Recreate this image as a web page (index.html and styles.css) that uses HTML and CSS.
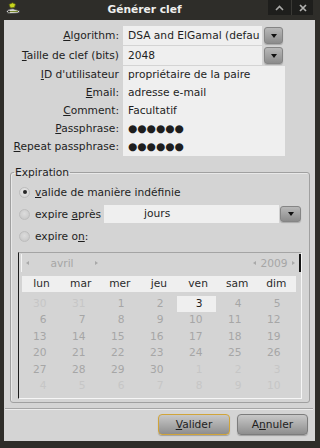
FILE: index.html
```html
<!DOCTYPE html>
<html lang="fr">
<head>
<meta charset="utf-8">
<title>Générer clef</title>
<link rel="stylesheet" href="styles.css">
</head>
<body>
<div class="window">
  <div class="titlebar">
    <span class="app-icon">
      <svg width="16" height="14" viewBox="0 0 16 14">
        <path d="M4 2.5 L7.5 0.8 L10.5 2.2 L9.5 5.5 L5.5 6 Z" fill="#c8d61e" stroke="#5a6010" stroke-width="0.8"/>
        <path d="M1.5 9.5 Q3 6.5 8 6.8 L14.5 8.8 Q15 10.5 13 11 L7 11.5 Q2.5 12.5 1.5 9.5 Z" fill="#e8e8e8" stroke="#3a3a3a" stroke-width="0.8"/>
        <path d="M3 9.6 L13 9.4" stroke="#7a8a30" stroke-width="1.2"/>
        <circle cx="4" cy="9.6" r="1.1" fill="#2c2b27"/>
      </svg>
    </span>
    <span class="title">Générer clef</span>
    <div class="wm-buttons">
      <span class="wm-btn max">
        <svg width="9" height="6" viewBox="0 0 9 6"><polyline points="1,5 4.5,1.5 8,5" fill="none" stroke="#a9a9a7" stroke-width="1.6"/></svg>
      </span>
      <span class="wm-btn close">
        <svg width="8" height="8" viewBox="0 0 8 8"><path d="M1 1 L7 7 M7 1 L1 7" stroke="#b2b2b0" stroke-width="1.7"/></svg>
      </span>
    </div>
  </div>

  <div class="content">
    <div class="form">
      <label class="lbl combo-lbl"><u>A</u>lgorithm:</label>
      <div class="combo">
        <div class="entry">DSA and ElGamal (defau</div>
        <span class="drop"><span class="tri"></span></span>
      </div>

      <label class="lbl combo-lbl"><u>T</u>aille de clef (bits)</label>
      <div class="combo">
        <div class="entry">2048</div>
        <span class="drop"><span class="tri"></span></span>
      </div>

      <label class="lbl"><u>I</u>D d'utilisateur</label>
      <div class="entry text">propriétaire de la paire</div>

      <label class="lbl"><u>E</u>mail:</label>
      <div class="entry text">adresse e-mail</div>

      <label class="lbl"><u>C</u>omment:</label>
      <div class="entry text">Facultatif</div>

      <label class="lbl"><u>P</u>assphrase:</label>
      <div class="entry text dots">●●●●●●</div>

      <label class="lbl"><u>R</u>epeat passphrase:</label>
      <div class="entry text dots">●●●●●●</div>
    </div>

    <fieldset class="expiration">
      <legend>Expiration</legend>
      <div class="radio-row">
        <span class="radio checked"></span>
        <span class="radio-text"><u>v</u>alide de manière indéfinie</span>
      </div>
      <div class="radio-row">
        <span class="radio"></span>
        <span class="radio-text">expire <u>a</u>près</span>
        <div class="entry days">jours</div>
        <span class="drop wide"><span class="tri"></span></span>
      </div>
      <div class="radio-row">
        <span class="radio"></span>
        <span class="radio-text">expire o<u>n</u>:</span>
      </div>

      <div class="calendar">
        <div class="cal-head">
          <div class="cal-group">
            <span class="arrow left"></span>
            <span class="cal-month">avril</span>
            <span class="arrow right"></span>
          </div>
          <div class="cal-group">
            <span class="arrow left"></span>
            <span class="cal-year">2009</span>
            <span class="arrow right"></span>
          </div>
        </div>
        <div class="day-names">
          <span>lun</span><span>mar</span><span>mer</span><span>jeu</span><span>ven</span><span>sam</span><span>dim</span>
        </div>
        <div class="days-grid">
          <span class="out">30</span><span class="out">31</span><span>1</span><span>2</span><span class="sel">3</span><span>4</span><span>5</span>
          <span>6</span><span>7</span><span>8</span><span>9</span><span>10</span><span>11</span><span>12</span>
          <span>13</span><span>14</span><span>15</span><span>16</span><span>17</span><span>18</span><span>19</span>
          <span>20</span><span>21</span><span>22</span><span>23</span><span>24</span><span>25</span><span>26</span>
          <span>27</span><span>28</span><span>29</span><span>30</span><span class="out">1</span><span class="out">2</span><span class="out">3</span>
          <span class="out">4</span><span class="out">5</span><span class="out">6</span><span class="out">7</span><span class="out">8</span><span class="out">9</span><span class="out">10</span>
        </div>
      </div>
    </fieldset>

    <div class="separator"></div>

    <div class="actions">
      <button class="btn default"><u>V</u>alider</button>
      <button class="btn cancel">A<u>n</u>nuler</button>
    </div>
  </div>
</div>
</body>
</html>
```

FILE: styles.css
```css
html, body {
  margin: 0;
  padding: 0;
}

body {
  background: #2e2d29;
  font-family: "DejaVu Sans", "Noto Sans", sans-serif;
  font-size: 10.67px;
  color: #1e1e1e;
}

u {
  text-decoration: underline;
  text-underline-offset: 1px;
  text-decoration-thickness: 1px;
}

.window {
  width: 320px;
  height: 448px;
  display: flex;
  flex-direction: column;
  overflow: hidden;
}

/* Title bar */
.titlebar {
  height: 20px;
  display: flex;
  align-items: flex-start;
  flex-shrink: 0;
}

.app-icon {
  width: 16px;
  height: 14px;
  margin: 2px 0 0 5px;
  display: flex;
}

.title {
  flex: 1;
  text-align: center;
  color: #f0f0ee;
  font-weight: bold;
  line-height: 20px;
}

.wm-buttons {
  display: flex;
  margin-right: 7px;
}

.wm-btn {
  height: 15px;
  background: #1e1e1c;
  display: flex;
  align-items: center;
  justify-content: center;
}

.wm-btn.max {
  width: 23px;
}

.wm-btn.close {
  width: 21px;
  border-left: 1px solid #3a3935;
}

/* Content */
.content {
  margin: 0 5px 0 4px;
  height: 421px;
  background: #d4d4d4;
  box-sizing: border-box;
  padding-top: 6px;
  display: flex;
  flex-direction: column;
}

.form {
  display: grid;
  grid-template-columns: 109px 162px;
  grid-template-rows: 20px 20px repeat(5, 18px);
  column-gap: 4px;
  padding-left: 6px;
}

.lbl {
  text-align: right;
  white-space: nowrap;
  line-height: 18px;
  height: 18px;
}

.lbl.combo-lbl {
  line-height: 19px;
  height: 19px;
}

.entry {
  background: #efefef;
  padding-left: 5px;
  box-sizing: border-box;
  height: 18px;
  line-height: 18px;
  white-space: nowrap;
  overflow: hidden;
}

.entry.dots {
  letter-spacing: 0;
}

.combo {
  display: flex;
  gap: 2px;
  height: 19px;
}

.combo .entry {
  width: 139px;
  height: 19px;
  line-height: 19px;
}

.drop {
  width: 19px;
  height: 17px;
  margin-top: 1px;
  box-sizing: border-box;
  border: 1px solid #858585;
  border-radius: 3px;
  background: linear-gradient(#b8b8b8, #8c8c8c);
  box-shadow: 0 1px 1px rgba(0, 0, 0, 0.2);
  display: flex;
  align-items: center;
  justify-content: center;
}

.drop.wide {
  width: 21px;
  height: 16px;
  margin: 0 1px 0 1px;
}

.tri {
  width: 0;
  height: 0;
  border-left: 3.5px solid transparent;
  border-right: 3.5px solid transparent;
  border-top: 4px solid #111;
}

/* Expiration frame */
.expiration {
  margin: 10px 5px 0 6px;
  padding: 2px 7px 3px 7px;
  border: 1px solid #a0a0a0;
  border-radius: 3px;
  box-shadow: inset 1px 1px 0 #e8e8e8;
  min-width: 0;
}

.expiration legend {
  padding: 0 1px;
  margin-left: -4px;
  line-height: 13px;
}

.radio-row {
  display: flex;
  align-items: center;
  height: 22px;
}

.radio {
  width: 11px;
  height: 11px;
  box-sizing: border-box;
  margin-left: 1px;
  border-radius: 50%;
  border: 1px solid #bdbdbd;
  background: radial-gradient(circle at 50% 40%, #dcdcdc, #c4c4c4);
  display: flex;
  align-items: center;
  justify-content: center;
  flex-shrink: 0;
}

.radio.checked {
  background: radial-gradient(circle at 50% 40%, #e8e8e8, #cfcfcf);
}

.radio.checked::after {
  content: "";
  width: 4px;
  height: 4px;
  border-radius: 50%;
  background: #262626;
}

.radio-text {
  margin-left: 5px;
  white-space: nowrap;
}

.entry.days {
  flex: 1;
  margin-left: 3px;
  padding-left: 40px;
}

/* Calendar */
.calendar {
  margin-top: 5px;
  border-top: 1px solid #a4a4a4;
  border-left: 1px solid #1c1c1c;
  border-right: 1px solid #f6f6f6;
  border-bottom: 1px solid #f6f6f6;
  padding: 1px 0 3.6px 0;
}

.cal-head {
  margin-left: 2px;
  height: 18px;
  border-left: 1px solid #f4f4f4;
  border-right: 2px solid #141414;
  display: flex;
  justify-content: space-between;
  align-items: center;
  color: #a6a6a6;
}

.cal-group {
  display: flex;
  align-items: center;
}

.arrow {
  width: 0;
  height: 0;
  border-top: 2.5px solid transparent;
  border-bottom: 2.5px solid transparent;
}

.arrow.left {
  border-right: 3px solid #a8a8a8;
}

.arrow.right {
  border-left: 3px solid #a8a8a8;
}

.cal-group:first-child .arrow.left {
  margin-left: 4px;
}

.cal-month {
  width: 66px;
  text-align: center;
}

.cal-year {
  width: 36px;
  text-align: center;
}

.cal-group:last-child .arrow.right {
  margin-right: 4px;
}

.day-names {
  margin: 4px 0 0 3px;
  width: 274px;
  height: 16px;
  background: #efefef;
  display: grid;
  grid-template-columns: repeat(7, 1fr);
  line-height: 16px;
  color: #2a2a2a;
}

.day-names span {
  text-align: center;
}

.days-grid {
  margin: 4px 0 0 2px;
  width: 273px;
  display: grid;
  grid-template-columns: repeat(7, 39px);
  grid-auto-rows: 16.4px;
  line-height: 16.4px;
  color: #a6a6a6;
}

.days-grid span {
  text-align: right;
  padding-right: 13.5px;
}

.days-grid span.out {
  color: #c6c6c6;
}

.days-grid span.sel {
  background: #efefef;
  color: #1e1e1e;
}

/* Bottom */
.separator {
  height: 1px;
  background: #a6a6a6;
  border-bottom: 1px solid #ececec;
  margin: 5px 2px 0 1px;
}

.actions {
  display: flex;
  justify-content: flex-end;
  gap: 7px;
  margin-top: 4px;
  padding-right: 7px;
}

.btn {
  height: 21px;
  box-sizing: border-box;
  font-family: inherit;
  font-size: inherit;
  color: #1e1e1e;
  border-radius: 4px;
  border: 1px solid #7c7c7c;
  background: linear-gradient(#c8c8c8, #8e8e8e);
  box-shadow: 0 1px 1px rgba(0, 0, 0, 0.25);
  padding: 0;
  line-height: 19px;
}

.btn.default {
  width: 72px;
  border-color: #d0a43a;
}

.btn.cancel {
  width: 71px;
}
```
